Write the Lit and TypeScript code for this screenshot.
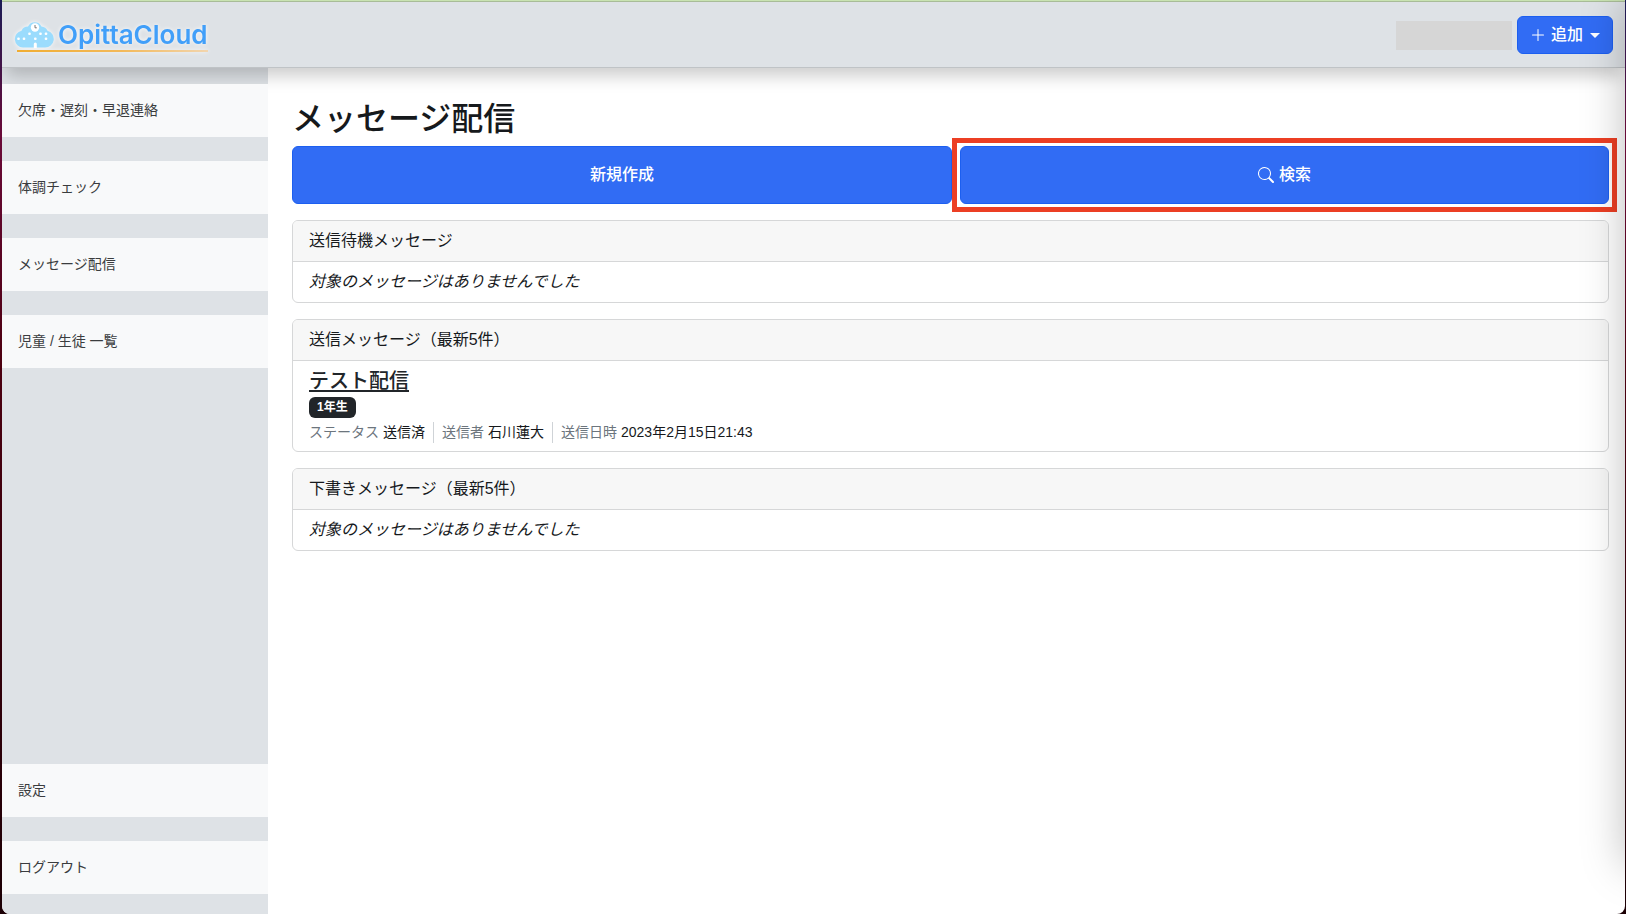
import { LitElement, html, css, svg, nothing } from "lit";
import { customElement, property } from "lit/decorators.js";

const plusIcon = svg`<path fill-rule="evenodd" d="M8 2a.5.5 0 0 1 .5.5v5h5a.5.5 0 0 1 0 1h-5v5a.5.5 0 0 1-1 0v-5h-5a.5.5 0 0 1 0-1h5v-5A.5.5 0 0 1 8 2Z"/>`;
const searchIcon = svg`<path d="M11.742 10.344a6.5 6.5 0 1 0-1.397 1.398h-.001c.03.04.062.078.098.115l3.85 3.85a1 1 0 0 0 1.415-1.414l-3.85-3.85a1.007 1.007 0 0 0-.115-.1zM12 6.5a5.5 5.5 0 1 1-11 0 5.5 5.5 0 0 1 11 0z"/>`;

interface Message {
  title: string;
  grade: string;
  status: string;
  sender: string;
  sentAt: string;
}

const sent: Message[] = [
  {
    title: "テスト配信",
    grade: "1年生",
    status: "送信済",
    sender: "石川蓮大",
    sentAt: "2023年2月15日21:43",
  },
];

@customElement("opitta-logo")
export class OpittaLogo extends LitElement {
  static styles = css`
    :host {
      display: block;
    }
    .logo {
      display: grid;
      grid-template-columns: 40px auto;
      column-gap: 4px;
      align-items: center;
      padding-top: 2px;
      text-decoration: none;
      filter: drop-shadow(0 0 2px rgba(255, 255, 255, 0.9));
    }
    .cloud {
      display: block;
      width: 40px;
      height: 28px;
    }
    .name {
      font: 600 26px/30px Inter, "Liberation Sans", sans-serif;
      color: #419ff9;
    }
    .line {
      grid-column: 1 / -1;
      height: 2px;
      margin-left: 3px;
      background: linear-gradient(90deg, #f0ad32, #f3b95a 55%, #f2d5ae);
    }
  `;

  render() {
    return html`
      <a class="logo" href="#">
        <svg class="cloud" viewBox="0 0 40 28" aria-hidden="true">
          <path
            fill="#9bdcfd"
            d="M9 26.500A8.500 8.500 0 0 1 7.500 9.700A7 7 0 0 1 14 5.500A7.500 7.500 0 0 1 27.500 5.500A7 7 0 0 1 33.500 9.800A8.500 8.500 0 0 1 31 26.500Z"
          />
          <circle cx="21" cy="6.500" r="4.200" fill="#fff" />
          <path d="M21 4V6.800H22.800" fill="none" stroke="#777" stroke-width="1" />
          <g fill="#fff">
            <rect x="14.200" y="11.500" width="2.600" height="2.600" rx="1" />
            <rect x="25.200" y="11.500" width="2.600" height="2.600" rx="1" />
            <rect x="30.700" y="11.500" width="2.600" height="2.600" rx="1" />
            <rect x="3.200" y="16.500" width="2.600" height="2.600" rx="1" />
            <rect x="8.700" y="16.500" width="2.600" height="2.600" rx="1" />
            <rect x="20" y="16.500" width="2.600" height="2.600" rx="1" />
            <rect x="30.700" y="16.500" width="2.600" height="2.600" rx="1" />
            <path d="M19.800 27v-4a1.500 1.500 0 0 1 3 0V27Z" />
          </g>
        </svg>
        <span class="name">OpittaCloud</span>
        <span class="line"></span>
      </a>
    `;
  }
}

@customElement("message-card")
export class MessageCard extends LitElement {
  @property() heading = "";
  @property({ attribute: false }) messages: Message[] = [];

  static styles = css`
    :host {
      display: block;
    }
    .card {
      border: 1px solid #d6d7d8;
      border-radius: 6px;
      background: #fff;
      overflow: hidden;
    }
    .heading {
      margin: 0;
      padding: 8px 16px;
      border-bottom: 1px solid #d6d7d8;
      background: #f7f7f7;
      font-size: 16px;
      font-weight: 400;
      line-height: 24px;
    }
    .body {
      padding: 8px 16px;
    }
    .empty {
      margin: 0;
      font-style: italic;
      line-height: 24px;
    }
    .message {
      display: flex;
      flex-direction: column;
      align-items: flex-start;
      gap: 4px;
    }
    .title {
      color: #212529;
      font-size: 20px;
      font-weight: 500;
      line-height: 24px;
      text-underline-offset: 2px;
    }
    .badge {
      padding: 0 8px;
      border-radius: 6px;
      background: #212529;
      color: #fff;
      font-size: 12px;
      font-weight: 700;
      line-height: 21px;
    }
    .meta {
      display: flex;
      margin: 0;
      font-size: 14px;
      line-height: 21px;
    }
    .pair {
      display: flex;
      gap: 4px;
    }
    .pair + .pair {
      margin-left: 8px;
      padding-left: 8px;
      border-left: 1px solid #cfd3d7;
    }
    .term {
      color: #6c757d;
    }
    .value {
      margin: 0;
    }
  `;

  private pair(term: string, value: string) {
    return html`<div class="pair"><dt class="term">${term}</dt><dd class="value">${value}</dd></div>`;
  }

  render() {
    return html`
      <section class="card">
        <h2 class="heading">${this.heading}</h2>
        <div class="body">
          ${this.messages.length
            ? nothing
            : html`<p class="empty">対象のメッセージはありませんでした</p>`}
          ${this.messages.map(
            (m) => html`
              <article class="message">
                <a class="title" href="#">${m.title}</a>
                <span class="badge">${m.grade}</span>
                <dl class="meta">
                  ${this.pair("ステータス", m.status)} ${this.pair("送信者", m.sender)}
                  ${this.pair("送信日時", m.sentAt)}
                </dl>
              </article>
            `
          )}
        </div>
      </section>
    `;
  }
}

@customElement("app-root")
export class AppRoot extends LitElement {
  static styles = css`
    :host {
      display: block;
      font-family: "Liberation Sans", "Noto Sans CJK JP", sans-serif;
      font-size: 16px;
      line-height: 24px;
      color: #16191c;
    }
    * {
      box-sizing: border-box;
    }
    .desktop {
      min-height: 100vh;
      display: flex;
      padding: 0 1px 0 2px;
      background: linear-gradient(#1b1c56, #6a0a38 15%, #4c0010 40%, #1c0005);
    }
    .window {
      position: relative;
      flex: 1;
      display: flex;
      flex-direction: column;
      overflow: hidden;
      border-radius: 0 0 8px 8px;
      background: #fff;
    }
    .topline {
      height: 2px;
      background: #c9e3b2;
      border-bottom: 1px solid #a9bd99;
    }
    .header {
      position: relative;
      display: flex;
      align-items: center;
      gap: 5px;
      padding: 14px 12px 13px 12px;
      border-bottom: 1px solid #bfc3c6;
      background: #dee2e6;
      box-shadow: 0 12px 16px -4px rgba(0, 0, 0, 0.2);
    }
    .user {
      width: 116px;
      height: 29px;
      margin-left: auto;
      background: #d6d6d6;
    }
    .btn {
      display: flex;
      align-items: center;
      justify-content: center;
      gap: 5px;
      padding: 6px 12px;
      border: 1px solid #1c5ff0;
      border-radius: 6px;
      background: #316cf4;
      color: #fff;
      font: inherit;
      font-weight: 500;
    }
    .icon {
      width: 16px;
      height: 16px;
      fill: currentColor;
    }
    .caret {
      margin-left: 2px;
      border: 5px solid transparent;
      border-top-color: currentColor;
      border-bottom: 0;
    }
    .columns {
      flex: 1;
      display: flex;
    }
    .sidebar {
      flex: 0 0 266px;
      display: flex;
      flex-direction: column;
      gap: 24px;
      padding: 16px 0 20px;
      background: #dee2e6;
    }
    .nav-link {
      position: relative;
      padding: 16px;
      background: #f8f9fa;
      color: #3a3c3e;
      font-size: 14px;
      line-height: 21px;
      text-decoration: none;
    }
    .bottom {
      margin-top: auto;
    }
    .main {
      flex: 1;
      min-width: 0;
      display: flex;
      flex-direction: column;
      gap: 16px;
      padding: 32px 16px 16px 24px;
    }
    .page-title {
      margin: 0 0 -8px;
      font-size: 32px;
      font-weight: 500;
      line-height: 38px;
    }
    .actions {
      display: flex;
      gap: 8px;
    }
    .action {
      position: relative;
      flex: 1 1 auto;
      padding: 16px;
    }
    .marked::after {
      content: "";
      position: absolute;
      inset: -9px;
      border: 5px solid #ec3f24;
    }
    .drawer-shadow {
      position: absolute;
      top: 0;
      bottom: 48px;
      left: 100%;
      width: 100px;
      box-shadow: 0 0 44px rgba(0, 0, 0, 0.26);
      pointer-events: none;
    }
  `;

  render() {
    return html`
      <div class="desktop">
        <div class="window">
          <div class="topline"></div>
          <header class="header">
            <opitta-logo></opitta-logo>
            <span class="user"></span>
            <button class="btn" type="button">
              <svg class="icon" viewBox="0 0 16 16" aria-hidden="true">${plusIcon}</svg>
              追加
              <span class="caret"></span>
            </button>
          </header>
          <div class="columns">
            <nav class="sidebar">
              <a class="nav-link" href="#">欠席・遅刻・早退連絡</a>
              <a class="nav-link" href="#">体調チェック</a>
              <a class="nav-link" href="#">メッセージ配信</a>
              <a class="nav-link" href="#">児童 / 生徒 一覧</a>
              <a class="nav-link bottom" href="#">設定</a>
              <a class="nav-link" href="#">ログアウト</a>
            </nav>
            <main class="main">
              <h1 class="page-title">メッセージ配信</h1>
              <div class="actions">
                <button class="btn action" type="button">新規作成</button>
                <button class="btn action marked" type="button">
                  <svg class="icon" viewBox="0 0 16 16" aria-hidden="true">${searchIcon}</svg>
                  検索
                </button>
              </div>
              <message-card heading="送信待機メッセージ"></message-card>
              <message-card heading="送信メッセージ（最新5件）" .messages=${sent}></message-card>
              <message-card heading="下書きメッセージ（最新5件）"></message-card>
            </main>
          </div>
          <div class="drawer-shadow"></div>
        </div>
      </div>
    `;
  }
}
